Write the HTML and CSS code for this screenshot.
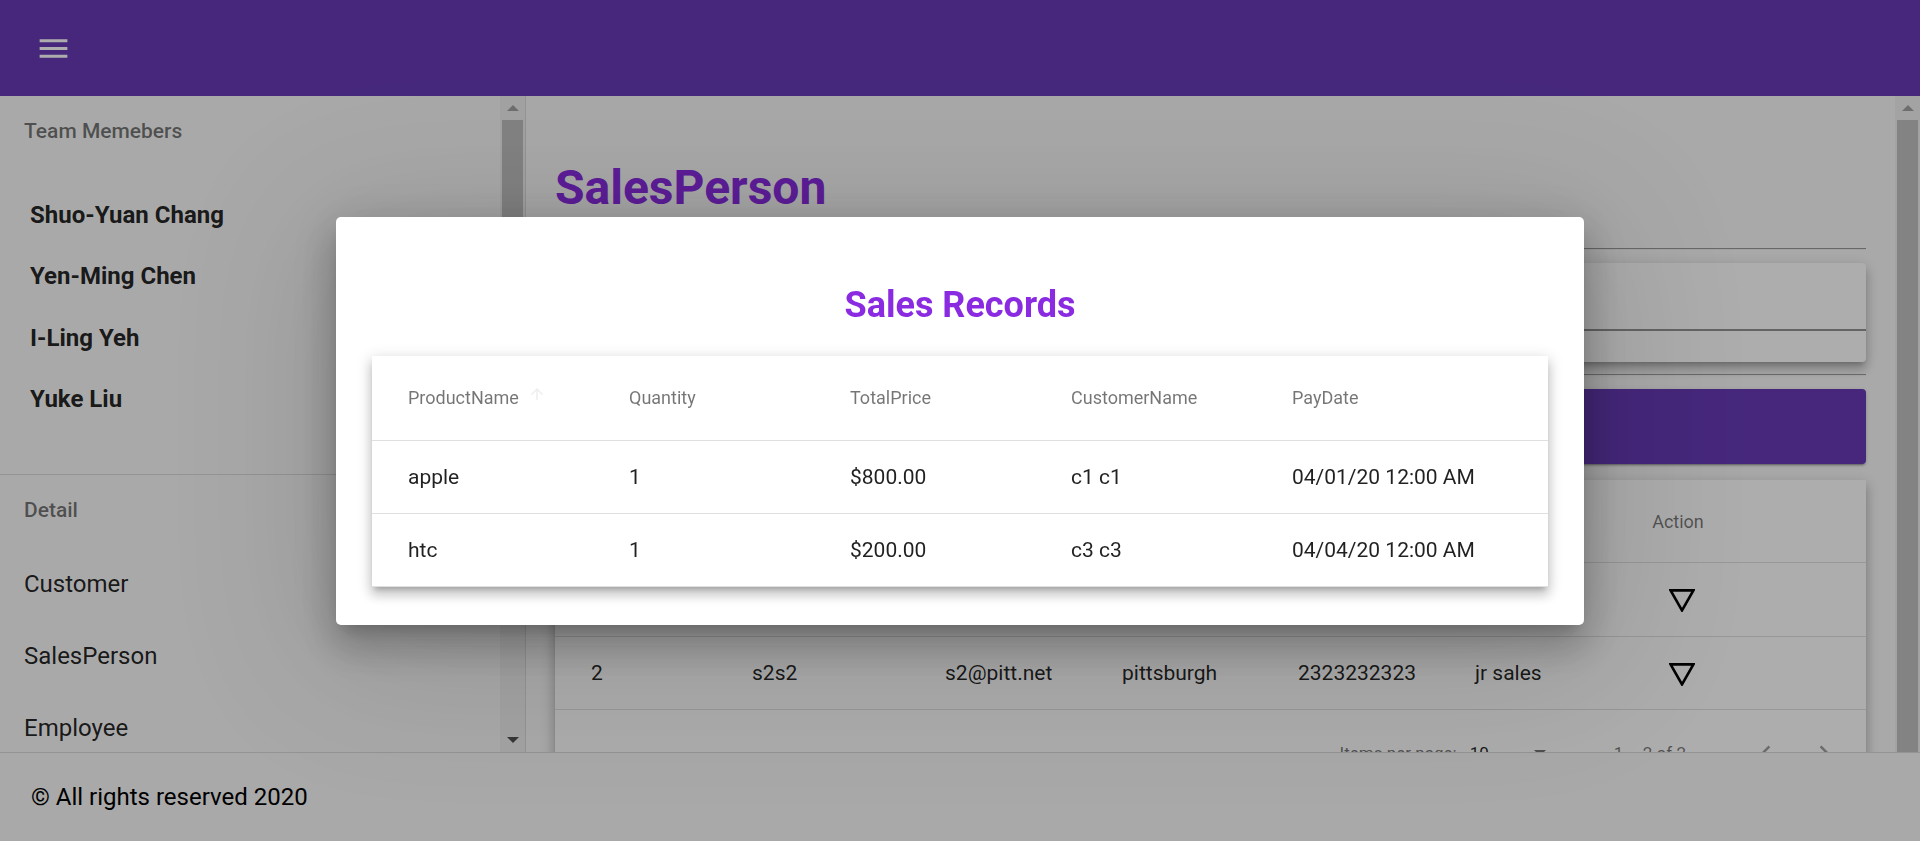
FILE: index.html
```html
<!DOCTYPE html>
<html lang="en">
<head>
<meta charset="utf-8">
<title>SalesPerson</title>
<link rel="stylesheet" href="styles.css">
</head>
<body>
<div class="app">
  <header class="toolbar">
    <button class="menu-btn" aria-label="Menu">
      <svg viewBox="0 0 24 24" width="37" height="37"><path fill="currentColor" d="M3 18h18v-2H3v2zm0-5h18v-2H3v2zm0-7v2h18V6H3z"/></svg>
    </button>
  </header>

  <div class="shell">
    <aside class="sidenav">
      <div class="sidenav-content">
        <div class="subheader">Team Memebers</div>
        <ul class="members">
          <li>Shuo-Yuan Chang</li>
          <li>Yen-Ming Chen</li>
          <li>I-Ling Yeh</li>
          <li>Yuke Liu</li>
        </ul>
        <div class="divider"></div>
        <div class="subheader">Detail</div>
        <ul class="nav">
          <li>Customer</li>
          <li>SalesPerson</li>
          <li>Employee</li>
          <li>Product</li>
        </ul>
      </div>
      <div class="scrollbar">
        <div class="sb-btn"><span class="sb-up"></span></div>
        <div class="sb-track"><div class="sb-thumb sb-thumb-side"></div></div>
        <div class="sb-btn"><span class="sb-down"></span></div>
      </div>
    </aside>

    <main class="main">
      <div class="main-content">
        <h1 class="page-title">SalesPerson</h1>
        <hr class="rule">
        <section class="search-card">
          <div class="search-field"></div>
        </section>
        <hr class="rule rule-small">
        <button class="add-btn">Add SalesPerson</button>

        <section class="sp-card">
          <div class="sp-row sp-head">
            <div>Id</div><div>Name</div><div>Email</div><div>City</div><div>Phone</div><div>Title</div><div class="sp-action sp-action-head">Action</div>
          </div>
          <div class="sp-row">
            <div>1</div><div>s1s1</div><div>s1@pitt.net</div><div>pittsburgh</div><div>1212121212</div><div>sr sales</div>
            <div class="sp-action"><svg class="tri" viewBox="0 0 26 23" width="26" height="23"><polygon points="1.6,1.4 24.4,1.4 13,21.4" fill="none" stroke="currentColor" stroke-width="2.6"/></svg></div>
          </div>
          <div class="sp-row">
            <div>2</div><div>s2s2</div><div>s2@pitt.net</div><div>pittsburgh</div><div>2323232323</div><div>jr sales</div>
            <div class="sp-action"><svg class="tri" viewBox="0 0 26 23" width="26" height="23"><polygon points="1.6,1.4 24.4,1.4 13,21.4" fill="none" stroke="currentColor" stroke-width="2.6"/></svg></div>
          </div>
          <div class="paginator">
            <span class="pg-label">Items per page:</span>
            <span class="pg-select"><span>10</span><span class="pg-caret"></span></span>
            <span class="pg-range">1 – 2 of 2</span>
            <span class="pg-btn"><svg viewBox="0 0 24 24" width="30" height="30"><path fill="currentColor" d="M15.41 7.41L14 6l-6 6 6 6 1.41-1.41L10.83 12z"/></svg></span>
            <span class="pg-btn"><svg viewBox="0 0 24 24" width="30" height="30"><path fill="currentColor" d="M10 6L8.59 7.41 13.17 12l-4.58 4.59L10 18l6-6z"/></svg></span>
          </div>
        </section>
      </div>
      <div class="scrollbar">
        <div class="sb-btn"><span class="sb-up"></span></div>
        <div class="sb-track"><div class="sb-thumb sb-thumb-main"></div></div>
      </div>
    </main>
  </div>

  <footer class="footer">© All rights reserved 2020</footer>
</div>

<div class="backdrop"></div>
<div class="dialog-wrap">
  <div class="dialog">
    <h2 class="dialog-title">Sales Records</h2>
    <div class="rec-card">
      <div class="rec-row rec-head">
        <div class="rec-sort">ProductName<svg class="sort-arrow" viewBox="0 0 24 24" width="18" height="18"><path fill="currentColor" d="M4 12l1.41 1.41L11 7.83V20h2V7.83l5.58 5.59L20 12l-8-8-8 8z"/></svg></div>
        <div>Quantity</div>
        <div>TotalPrice</div>
        <div>CustomerName</div>
        <div>PayDate</div>
      </div>
      <div class="rec-row">
        <div>apple</div><div>1</div><div>$800.00</div><div>c1 c1</div><div>04/01/20 12:00 AM</div>
      </div>
      <div class="rec-row">
        <div>htc</div><div>1</div><div>$200.00</div><div>c3 c3</div><div>04/04/20 12:00 AM</div>
      </div>
    </div>
  </div>
</div>
</body>
</html>
```

FILE: styles.css
```css
* { box-sizing: border-box; }
html, body { margin: 0; padding: 0; }
body {
  font-family: Roboto, "Liberation Sans", sans-serif;
  background: #fafafa;
  color: rgba(0, 0, 0, 0.87);
  overflow: hidden;
}
ul { list-style: none; margin: 0; padding: 0; }

.app { height: 841px; display: flex; flex-direction: column; }

/* toolbar */
.toolbar {
  flex: none;
  height: 96px;
  background: #673ab7;
  display: flex;
  align-items: center;
  padding-left: 35px;
}
.menu-btn { border: 0; padding: 0; background: none; color: #fff; width: 37px; height: 37px; }
.menu-btn svg { display: block; }

/* shell */
.shell { flex: 1; min-height: 0; display: flex; overflow: hidden; }

.sidenav {
  flex: none;
  width: 526px;
  display: flex;
  background: #fafafa;
  border-right: 1px solid rgba(0, 0, 0, 0.12);
}
.sidenav-content { flex: 1; overflow: hidden; }
.subheader {
  height: 70px;
  display: flex;
  align-items: center;
  padding-left: 24px;
  font-size: 21px;
  font-weight: 500;
  color: rgba(0, 0, 0, 0.54);
}
.members { padding: 18px 0 44px 30px; }
.members li {
  height: 61.5px;
  display: flex;
  align-items: center;
  font-size: 24px;
  font-weight: 700;
}
.divider { height: 1px; background: rgba(0, 0, 0, 0.12); }
.nav { padding: 3px 0 0 24px; }
.nav li {
  height: 72px;
  display: flex;
  align-items: center;
  font-size: 24px;
}

/* scrollbars */
.scrollbar {
  flex: none;
  width: 25px;
  display: flex;
  flex-direction: column;
  background: #f1f1f1;
}
.sb-btn { height: 24px; flex: none; display: flex; align-items: center; justify-content: center; }
.sb-up { width: 0; height: 0; border-left: 6px solid transparent; border-right: 6px solid transparent; border-bottom: 6px solid #a3a3a3; }
.sb-down { width: 0; height: 0; border-left: 6px solid transparent; border-right: 6px solid transparent; border-top: 6px solid #505050; }
.sb-track { flex: 1; padding: 0 2px; display: flex; flex-direction: column; }
.sb-thumb { background: #c1c1c1; }
.sb-thumb-side { height: 470px; }
.sb-thumb-main { flex: 1; }

/* main */
.main { flex: 1; min-width: 0; display: flex; background: #fafafa; }
.main-content { flex: 1; overflow: hidden; padding: 64px 29px 0 29px; }
.page-title {
  margin: 0;
  font-size: 48px;
  line-height: 56px;
  font-weight: 700;
  color: #8a2be2;
}
.rule {
  margin: 32px 0 0;
  height: 0;
  border: 0;
  border-top: 1px solid #9a9a9a;
  border-bottom: 1px solid #eeeeee;
}
.rule-small { margin-top: 12px; }
.search-card {
  margin-top: 13px;
  height: 99px;
  background: #fff;
  border-radius: 4px;
  padding-top: 66px;
  box-shadow: 0 5px 5px -3px rgba(0,0,0,.2), 0 8px 10px 1px rgba(0,0,0,.14), 0 3px 14px 2px rgba(0,0,0,.12);
}
.search-field { height: 2px; background: rgba(0, 0, 0, 0.42); }
.add-btn {
  display: block;
  width: 100%;
  margin-top: 13px;
  height: 75px;
  border: 0;
  border-radius: 4px;
  background: #673ab7;
  color: #fff;
  font: 500 18px Roboto, "Liberation Sans", sans-serif;
  box-shadow: 0 3px 1px -2px rgba(0,0,0,.2), 0 2px 2px 0 rgba(0,0,0,.14), 0 1px 5px 0 rgba(0,0,0,.12);
}

.sp-card {
  margin-top: 16px;
  background: #fff;
  box-shadow: 0 5px 5px -3px rgba(0,0,0,.2), 0 8px 10px 1px rgba(0,0,0,.14), 0 3px 14px 2px rgba(0,0,0,.12);
}
.sp-row {
  display: grid;
  grid-template-columns: 161px 193px 177px 176px 177px 160px 94px;
  align-items: center;
  padding-left: 36px;
  height: 73.5px;
  border-bottom: 1px solid rgba(0, 0, 0, 0.12);
  font-size: 21px;
  white-space: nowrap;
}
.sp-head { height: 83px; font-size: 18px; color: rgba(0, 0, 0, 0.54); }
.sp-action { text-align: center; }
.sp-action-head { padding-right: 8px; }
.tri { display: inline-block; vertical-align: middle; color: #000; margin-top: 2px; }

.paginator {
  height: 86px;
  display: flex;
  align-items: center;
  justify-content: flex-end;
  padding-right: 26px;
  font-size: 17px;
  color: rgba(0, 0, 0, 0.54);
  white-space: nowrap;
}
.pg-label { margin-right: 13px; }
.pg-select { width: 92px; display: flex; align-items: center; justify-content: space-between; color: rgba(0,0,0,.87); padding-right: 16px; }
.pg-caret { width: 0; height: 0; border-left: 6px solid transparent; border-right: 6px solid transparent; border-top: 6px solid rgba(0,0,0,.54); }
.pg-range { margin-left: 52px; margin-right: 64px; }
.pg-btn { width: 32px; display: flex; justify-content: center; color: rgba(0,0,0,.38); }
.pg-btn + .pg-btn { margin-left: 26px; }
.pg-btn svg { display: block; }

/* footer */
.footer {
  flex: none;
  height: 89px;
  display: flex;
  align-items: center;
  padding-left: 31px;
  border-top: 1px solid rgba(0, 0, 0, 0.12);
  background: #fafafa;
  font-size: 24px;
  color: #000;
}

/* dialog overlay */
.backdrop {
  position: fixed;
  inset: 0;
  background: rgba(0, 0, 0, 0.32);
}
.dialog-wrap {
  position: fixed;
  inset: 0;
  display: flex;
  align-items: center;
  justify-content: center;
}
.dialog {
  width: 1248px;
  background: #fff;
  border-radius: 5px;
  padding: 24px 36px 38px;
  box-shadow: 0 11px 15px -7px rgba(0,0,0,.2), 0 24px 38px 3px rgba(0,0,0,.14), 0 9px 46px 8px rgba(0,0,0,.12), 0 20px 160px 40px rgba(0,0,0,.12);
}
.dialog-title {
  margin: 44px 0 31px;
  text-align: center;
  font-size: 36px;
  line-height: 40px;
  font-weight: 700;
  color: #8a2be2;
}
.rec-card {
  background: #fff;
  box-shadow: 0 5px 5px -3px rgba(0,0,0,.2), 0 8px 10px 1px rgba(0,0,0,.14), 0 3px 14px 2px rgba(0,0,0,.12);
}
.rec-row {
  display: grid;
  grid-template-columns: repeat(5, 221px);
  align-items: center;
  padding: 0 35px 0 36px;
  height: 73px;
  border-bottom: 1px solid rgba(0, 0, 0, 0.12);
  font-size: 21px;
  white-space: nowrap;
}
.rec-head { height: 85px; font-size: 18px; color: rgba(0, 0, 0, 0.54); }
.rec-sort { display: flex; align-items: center; }
.sort-arrow { margin-left: 9px; margin-top: -8px; color: rgba(0, 0, 0, 0.07); }
```
